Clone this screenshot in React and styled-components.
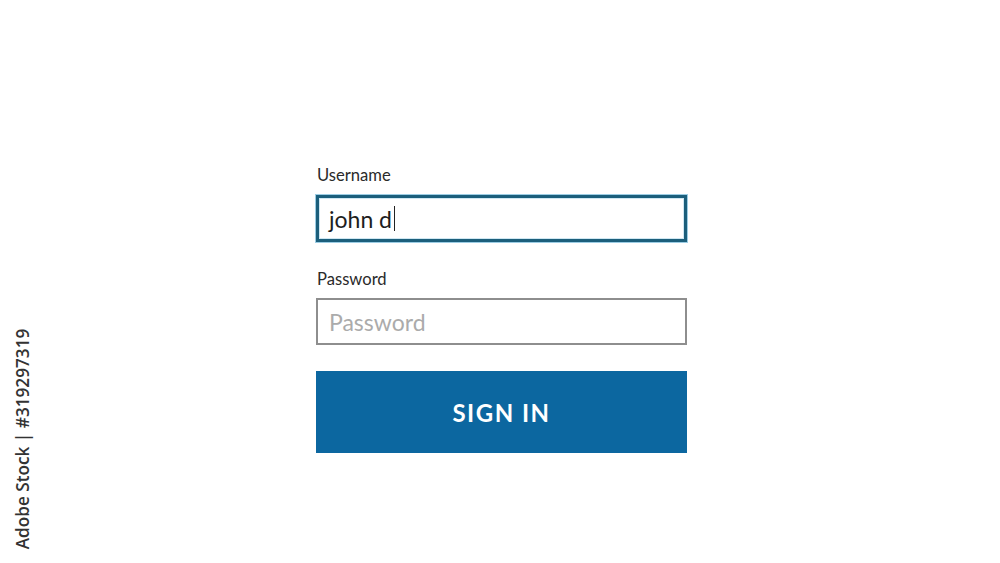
import React from "react";
import styled, { createGlobalStyle } from "styled-components";

const Global = createGlobalStyle`
  html, body { margin: 0; padding: 0; background: #ffffff; }
  body { font-family: Lato, "Open Sans", Arial, sans-serif; }
`;

const Page = styled.div`
  position: relative;
  width: 1000px;
  height: 563px;
  background: #ffffff;
  overflow: hidden;
  display: flex;
  justify-content: center;
  padding-left: 3px;
  box-sizing: border-box;
`;

const Form = styled.form`
  width: 371px;
  margin-top: 166px;
  display: flex;
  flex-direction: column;
`;

const Label = styled.label`
  font-family: Lato, sans-serif;
  font-size: 16.6px;
  line-height: 18px;
  height: 18px;
  color: #2a2a2a;
  margin-top: ${(p) => p.$top || 0}px;
  margin-bottom: ${(p) => p.$gap || 11}px;
  padding-left: 1px;
`;

const Field = styled.div`
  height: 47px;
  box-sizing: border-box;
  display: flex;
  align-items: center;
  background: #fff;
  border: ${(p) => (p.$focused ? "3px solid #1c5f7c" : "2px solid #8e8e8e")};
  box-shadow: ${(p) => (p.$focused ? "0 0 0 1px #9ccde4, inset 0 0 0 1px #cfe7f2" : "none")};
  font-family: Lato, sans-serif;
  font-size: 23px;
  color: ${(p) => (p.$placeholder ? "#ababab" : "#1e1e1e")};
  padding-left: ${(p) => (p.$focused ? 10 : 11)}px;
`;

const Caret = styled.span`
  display: inline-block;
  width: 1px;
  height: 25px;
  background: #222;
  margin-left: 2px;
  vertical-align: middle;
`;

const Button = styled.button`
  margin-top: 26px;
  height: 82px;
  border: none;
  background: #0c67a0;
  color: #ffffff;
  font-family: Lato, sans-serif;
  font-weight: 700;
  font-size: 24px;
  letter-spacing: 1.5px;
  cursor: pointer;
  padding: 0;
`;

const SideMark = styled.div`
  position: absolute;
  left: 22px;
  top: 439px;
  transform: translate(-50%, -50%) rotate(-90deg);
  white-space: nowrap;
  font-family: "Open Sans", sans-serif;
  font-weight: 600;
  font-size: 17.2px;
  color: #333333;
`;

export default function App() {
  return (
    <>
      <Global />
      <Page>
        <Form onSubmit={(e) => e.preventDefault()}>
          <Label $gap={11}>Username</Label>
          <Field $focused>
            <span>john d</span>
            <Caret />
          </Field>
          <Label $top={28} $gap={10}>Password</Label>
          <Field $placeholder>Password</Field>
          <Button type="submit">SIGN IN</Button>
        </Form>
        <SideMark>Adobe Stock | #319297319</SideMark>
      </Page>
    </>
  );
}
